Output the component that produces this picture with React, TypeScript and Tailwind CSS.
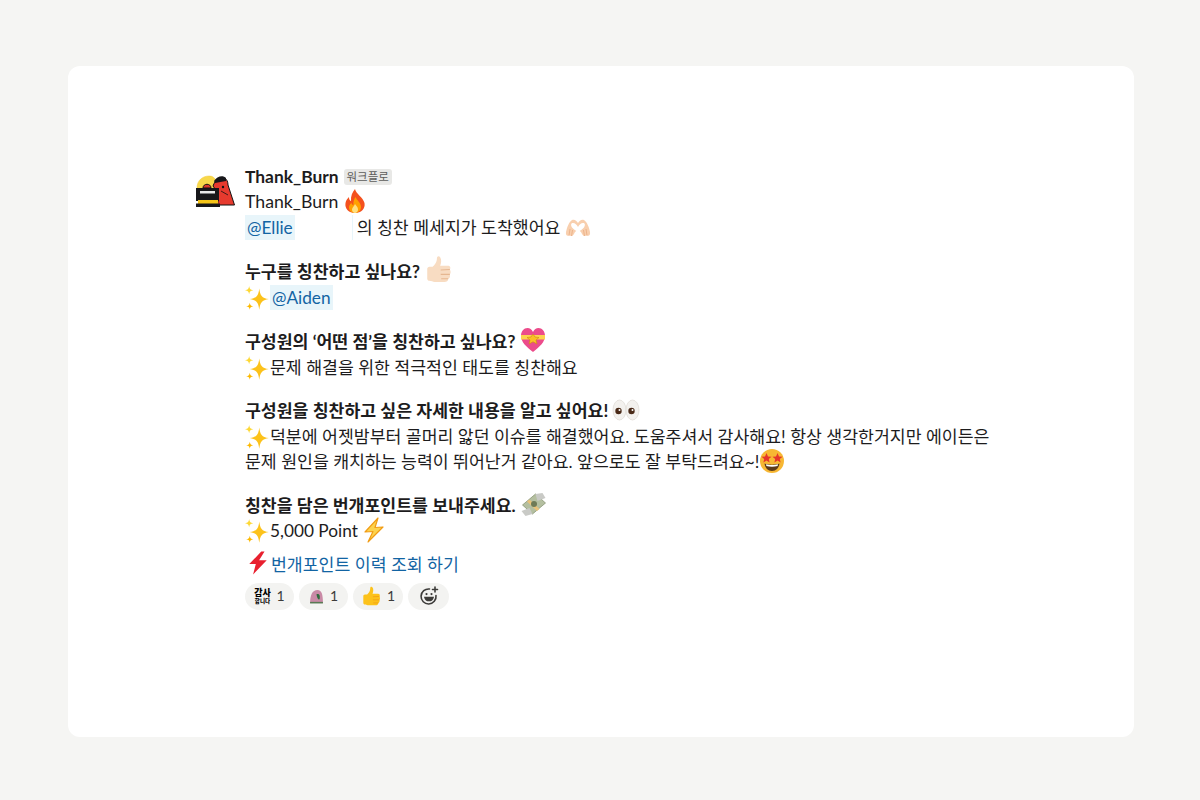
import React from "react";

const font = "font-['Lato','Noto_Sans_CJK_KR',sans-serif]";

function Sparkles() {
  return (
    <svg width="25" height="25" viewBox="2 2 21 21" className="inline-block -my-[8px] align-[1px]">
      <path d="M14 4 C14.8 10 16 12 22 13 C16 14 14.8 16 14 22 C13.2 16 12 14 6 13 C12 12 13.2 10 14 4Z" fill="#fcc21b" />
      <path d="M5.5 2 C5.9 4.5 6.5 5.2 9 5.5 C6.5 5.9 5.9 6.5 5.5 9 C5.1 6.5 4.5 5.9 2 5.5 C4.5 5.2 5.1 4.5 5.5 2Z" fill="#fdd835" />
      <path d="M6 16 C6.3 18 6.9 18.6 9 19 C6.9 19.3 6.3 20 6 22 C5.7 20 5.1 19.3 3 19 C5.1 18.6 5.7 18 6 16Z" fill="#fdb900" />
    </svg>
  );
}

function Fire() {
  return (
    <svg width="24" height="26" viewBox="0 0 24 26" className="inline-block -my-[8px] align-[2px]">
      <path d="M12 1 C13 6 20 9 21.5 15 C22.5 21 18 25 12 25 C6 25 1.5 21 2.5 15 C3 12 4.5 10.5 6 9 C6 11 6.5 12.5 8 13 C7.5 8 9.5 4 12 1Z" fill="#f4511e" />
      <path d="M12.5 9 C13.5 12 18 14.5 18 19 C18 22.5 15 25 12 25 C8.5 25 6 22.5 6 19.5 C6 17.5 7 16 8.5 15 C9 16.5 9.5 17 10.5 17 C10 14 11 11 12.5 9Z" fill="#ffa000" />
      <path d="M12 16 C13 18 15 19 15 21.5 C15 23.5 13.5 25 12 25 C10.5 25 9 23.5 9 21.5 C9 19.5 11 18.5 12 16Z" fill="#ffe082" />
    </svg>
  );
}

function HeartHands() {
  return (
    <svg width="26" height="20" viewBox="0 0 26 20" className="inline-block -my-[6px] align-[2px]">
      <path d="M7 2 C9.5 1 11.5 2.5 13 5 C14.5 2.5 16.5 1 19 2 C22 4 24 9 25 14 C25.5 17 24 18.5 22 17.5 L19.5 18 C18 18 17 16 16 14 L13 11.5 L10 14 C9 16 8 18 6.5 18 L4 17.5 C2 18.5 0.5 17 1 14 C2 9 4 4 7 2Z" fill="#f8cfae" />
      <path d="M8 5 C10 5 12 7 13 9 C14 7 16 5 18 5 C20 5 20.5 7 19 9.5 C17.5 11.5 15 12.5 13 14 C11 12.5 8.5 11.5 7 9.5 C5.5 7 6 5 8 5Z" fill="#ffffff" />
      <path d="M4 17.5 L5 11 M6.5 18 L7.5 12 M22 17.5 L21 11 M19.5 18 L18.5 12" stroke="#e8ab80" strokeWidth="0.8" fill="none" />
    </svg>
  );
}

function Thumb({ light, size = 28 }: { light?: boolean; size?: number }) {
  const main = light ? "#f8dcc2" : "#fcc21b";
  const dark = light ? "#e6b791" : "#f19c15";
  return (
    <svg width={size} height={size} viewBox="0 0 26 26" className="inline-block -my-[8px] align-[3px]">
      <path d="M3 13 C3 12 4 11 5 11 L8 11 C10 9 12 7 12 3 C12 1 14 0.5 15 2 C16.5 4 16 7.5 15 10 L22 10 C24.5 10 25 12 24 13.5 C25 15 25 17 24 18 C24.5 20 24 21.5 22.5 22 C22.5 24 21 25 19 25 L10 25 C8 25 7 24 5 24 C4 24 3 23 3 22Z" fill={main} />
      <path d="M15.5 14 L24 13.5 M15.5 18 L24 18 M16 22 L22.5 22" stroke={dark} strokeWidth="1" fill="none" />
    </svg>
  );
}

function RibbonHeart() {
  return (
    <svg width="26" height="26" viewBox="0 0 26 26" className="inline-block -my-[8px] align-[3px]">
      <path d="M13 25 C6 19.5 1 15 1 8.5 C1 4.5 4 1 7.5 1 C9.8 1 11.8 2.5 13 5 C14.2 2.5 16.2 1 18.5 1 C22 1 25 4.5 25 8.5 C25 15 20 19.5 13 25Z" fill="#ec4b8b" />
      <path d="M1 8 L25 8 L25 12.5 L1 12.5Z" fill="#fcd34d" />
      <path d="M13 7 L15 10 L19 10.5 L16 13 L17 17 L13 14.8 L9 17 L10 13 L7 10.5 L11 10Z" fill="#fbbf24" stroke="#c98a12" strokeWidth="0.6" />
    </svg>
  );
}

function Eyes() {
  return (
    <svg width="28" height="22" viewBox="0 0 28 22" className="inline-block -my-[6px] align-[2px]">
      <ellipse cx="7.5" cy="11" rx="6.5" ry="10" fill="#f3f1ee" stroke="#dcd8d2" strokeWidth="0.7" />
      <ellipse cx="20.5" cy="11" rx="6.5" ry="10" fill="#f3f1ee" stroke="#dcd8d2" strokeWidth="0.7" />
      <circle cx="6.5" cy="12" r="3.2" fill="#4a2a18" />
      <circle cx="19.5" cy="12" r="3.2" fill="#4a2a18" />
      <circle cx="7.5" cy="11" r="1" fill="#fff" />
      <circle cx="20.5" cy="11" r="1" fill="#fff" />
    </svg>
  );
}

function StarStruck() {
  const star = "M0 -5 L1.5 -1.6 L5 -1.3 L2.3 1 L3.1 4.5 L0 2.6 L-3.1 4.5 L-2.3 1 L-5 -1.3 L-1.5 -1.6Z";
  return (
    <svg width="26" height="26" viewBox="0 0 26 26" className="inline-block -my-[8px] align-[2px]">
      <circle cx="13" cy="13" r="12" fill="#f7b733" />
      <path d={star} transform="translate(7.5 10)" fill="#e5352b" />
      <path d={star} transform="translate(18.5 10)" fill="#e5352b" />
      <path d="M5.5 15.5 C9 17 17 17 20.5 15.5 C20 20 17 23 13 23 C9 23 6 20 5.5 15.5Z" fill="#5b3a1a" />
      <path d="M7 16.2 C10 17.2 16 17.2 19 16.2 L18.6 18 C15 19 11 19 7.4 18Z" fill="#fff" />
    </svg>
  );
}

function MoneyWings() {
  return (
    <svg width="27" height="24" viewBox="0 0 26 24" className="inline-block -my-[7px] align-[2px]">
      <path d="M2 12 L15 1 L25 10 L12 21Z" fill="#b4bfa0" stroke="#7f8d6a" strokeWidth="0.7" />
      <path d="M9 15 L12 21 L5 23 L1 18Z" fill="#c9cac6" />
      <path d="M17 8 L15 1 L22 0 L25 5Z" fill="#c9cac6" />
      <path d="M9 6.5 L19 16 L16.5 18 L6.5 8.5Z" fill="#e9c27a" />
      <circle cx="13.5" cy="11" r="3" fill="#6e7a56" />
    </svg>
  );
}

function Zap() {
  return (
    <svg width="24" height="26" viewBox="0 0 24 26" className="inline-block -my-[8px] align-[2px]">
      <path d="M16 1 L3 15 L11 14.5 L6 25 L21 10 L13 10.5Z" fill="#fcd34d" stroke="#f19c15" strokeWidth="1.2" strokeLinejoin="round" />
    </svg>
  );
}

function RedBolt() {
  return (
    <svg width="22" height="24" viewBox="0 0 20 22" className="inline-block -my-[6px] ml-[2px] mr-[2px] align-[2px]">
      <path d="M13 0.5 L2 12 L8 12 L5.5 21.5 L18 8.5 L11 8.5 L16 0.5Z" fill="#e8202f" />
    </svg>
  );
}

function Avatar() {
  return (
    <svg width="40" height="34" viewBox="0 0 40 34" className="shrink-0">
      <path d="M2 14 C2 6 8 2 14 2 C18 2 20 4 21 7 L21 20 L2 20Z" fill="#f8d84a" stroke="#f3c93a" strokeWidth="0.5" />
      <path d="M18 12 C20 6 25 3 29 4 C32 5 33 8 33 11 L39.5 31 L22 31 C25 25 22 17 18 12Z" fill="#e63a2e" stroke="#111" strokeWidth="1" />
      <path d="M19 7 C22 2 28 1 31 4 L31 7 L20 9Z" fill="#17171a" />
      <rect x="1" y="14" width="23" height="13" fill="#17171a" />
      <path d="M8 14 C8 9 16 9 16 14Z" fill="#d9372b" stroke="#111" strokeWidth="1" />
      <rect x="5" y="17" width="15" height="2.5" fill="#e8e8e8" />
      <rect x="3" y="26" width="20" height="4" fill="#f5c518" />
      <rect x="1" y="29.5" width="24" height="3.5" fill="#17171a" />
      <circle cx="28" cy="13" r="1.2" fill="#111" />
      <path d="M26 17 L33 21" stroke="#111" strokeWidth="0.8" />
    </svg>
  );
}

function BlobReaction() {
  return (
    <svg width="15" height="15" viewBox="0 0 14 14">
      <path d="M1 13 C1 6 3 1 8 1 C12 1 13 6 13 13Z" fill="#c98aa6" />
      <path d="M7 5 C9.5 4 10.5 6 10 9 C9 11 7.5 9 7 5Z" fill="#2f6b3c" />
      <path d="M1 12 L13 12 L13 13.5 L1 13.5Z" fill="#5a7a55" />
    </svg>
  );
}

function Mention({ children }: { children: React.ReactNode }) {
  return <span className="inline-block h-[25.5px] bg-[#e8f5fa] px-[2px] text-[#1264a3]">{children}</span>;
}

function Pill({ children, count, width }: { children: React.ReactNode; count: string; width: string }) {
  return (
    <div className={`flex h-[27px] items-center justify-center gap-[6px] rounded-full bg-[#f3f3f1] text-[14px] text-[#3d3c3a] ${width}`}>
      {children}
      <span>{count}</span>
    </div>
  );
}

export default function App() {
  return (
    <div className={`min-h-[800px] bg-[#f5f5f3] pt-[66px] pl-[68px] pr-[66px] pb-[63px] ${font}`}>
      <div className="h-[671px] rounded-[12px] bg-white pl-[127px] pt-[98px]">
        <div className="flex gap-[10px]">
          <div className="pt-[10px]">
            <Avatar />
          </div>
          <div className="text-[17.25px] leading-[25.5px] text-[#1d1c1d]">
            <div className="flex h-[25px] items-center gap-[5px]">
              <span className="text-[17.4px] font-bold">Thank_Burn</span>
              <span className="rounded-[3px] bg-[#e8e8e6] px-[3px] text-[11.5px] leading-[16px] text-[#5e5d5b]">워크플로</span>
            </div>
            <div className="text-[17.7px]">
              Thank_Burn <Fire />
            </div>
            <div className="flex items-center">
              <Mention>@Ellie</Mention>
              <span className="h-[25px] w-[58px] border-r border-[#e8f5fa] bg-white" />
              <span className="ml-[4px]">
                의 칭찬 메세지가 도착했어요 <HeartHands />
              </span>
            </div>

            <div className="mt-[19px] font-bold">
              누구를 칭찬하고 싶나요? <Thumb light />
            </div>
            <div>
              <Sparkles />
              <Mention>@Aiden</Mention>
            </div>

            <div className="mt-[19px] font-bold">
              구성원의 ‘어떤 점’을 칭찬하고 싶나요? <RibbonHeart />
            </div>
            <div>
              <Sparkles />문제 해결을 위한 적극적인 태도를 칭찬해요
            </div>

            <div className="mt-[18px] font-bold">
              구성원을 칭찬하고 싶은 자세한 내용을 알고 싶어요! <Eyes />
            </div>
            <div>
              <Sparkles />덕분에 어젯밤부터 골머리 앓던 이슈를 해결했어요. 도움주셔서 감사해요! 항상 생각한거지만 에이든은
            </div>
            <div>
              문제 원인을 캐치하는 능력이 뛰어난거 같아요. 앞으로도 잘 부탁드려요~!<StarStruck />
            </div>

            <div className="mt-[18px] font-bold">
              칭찬을 담은 번개포인트를 보내주세요. <MoneyWings />
            </div>
            <div>
              <Sparkles />5,000 Point <Zap />
            </div>

            <div className="mt-[8.5px] text-[#1264a3]">
              <RedBolt />번개포인트 이력 조회 하기
            </div>

            <div className="mt-[5px] flex gap-[5px]">
              <Pill count="1" width="w-[49px]">
                <span className="flex w-[16px] flex-col items-center font-black whitespace-nowrap text-black">
                  <span className="text-[9px] leading-[10px]">감사</span>
                  <span className="text-[5.5px] leading-[6px]">합니다</span>
                </span>
              </Pill>
              <Pill count="1" width="w-[49px]">
                <BlobReaction />
              </Pill>
              <Pill count="1" width="w-[50px]">
                <Thumb size={20} />
              </Pill>
              <div className="flex h-[27px] w-[41px] items-center justify-center rounded-full bg-[#f3f3f1]">
                <svg width="20" height="20" viewBox="0 0 20 20" fill="none" stroke="#3d3c3a" strokeWidth="1.6" strokeLinecap="round">
                  <path d="M17 9.5 A7.5 7.5 0 1 1 10.5 3" />
                  <path d="M6 11.5 C7 15.5 13 15.5 14 11.5 Z" fill="#3d3c3a" />
                  <path d="M7.5 8 L7.5 8.1 M12.5 8 L12.5 8.1" strokeWidth="2.2" />
                  <path d="M16 1 L16 6 M13.5 3.5 L18.5 3.5" />
                </svg>
              </div>
            </div>
          </div>
        </div>
      </div>
    </div>
  );
}
